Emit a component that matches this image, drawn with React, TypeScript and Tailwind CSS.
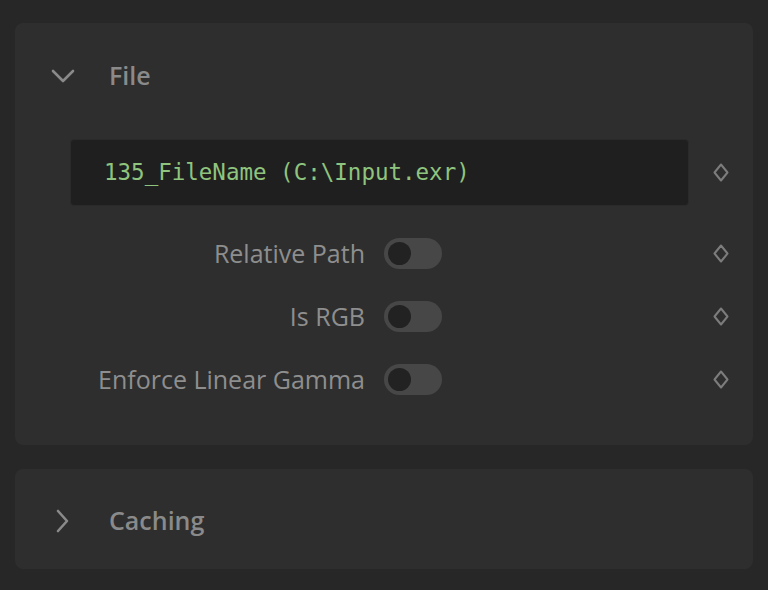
import React from "react";

const Diamond = () => (
  <svg width="16" height="19" viewBox="0 0 16 19" fill="none">
    <path
      d="M8 1.5 L14.5 9.5 L8 17.5 L1.5 9.5 Z"
      stroke="#7c7c7c"
      strokeWidth="2"
      strokeLinejoin="round"
    />
  </svg>
);

const Toggle = () => (
  <div className="flex items-center w-[58px] h-[31px] rounded-full bg-[#474747] px-[4px]">
    <div className="w-[23px] h-[23px] rounded-full bg-[#222222]" />
  </div>
);

const ToggleRow = ({ label }: { label: string }) => (
  <div className="flex items-center h-[63px]">
    <div className="w-[350px] text-right text-[25px] text-[#8e8e8e]">{label}</div>
    <div className="ml-[19px]">
      <Toggle />
    </div>
    <div className="flex-1" />
    <div className="w-[64px] flex justify-center">
      <Diamond />
    </div>
  </div>
);

export default function App() {
  return (
    <div
      className="w-[768px] h-[590px] bg-[#272727] px-[15px] pt-[23px] flex flex-col gap-[24px]"
      style={{ fontFamily: "'Open Sans', 'Noto Sans', sans-serif" }}
    >
      <div className="h-[422px] rounded-[8px] bg-[#2e2e2e] flex flex-col">
        <div className="h-[105px] flex items-center">
          <div className="w-[94px] flex justify-center pl-[2px]">
            <svg width="24" height="14" viewBox="0 0 24 14" fill="none">
              <path
                d="M2 2 L12 12 L22 2"
                stroke="#8a8a8a"
                strokeWidth="2.6"
                strokeLinecap="round"
                strokeLinejoin="round"
              />
            </svg>
          </div>
          <div className="text-[25px] font-semibold text-[#8a8a8a]">File</div>
        </div>
        <div className="flex flex-col pl-[55px] pt-[11px]">
          <div className="flex items-center">
            <div className="flex-1 h-[67px] rounded-[4px] bg-[#1f1f1f] border border-[#2a2a2a] flex items-center pl-[33px]">
              <span
                className="text-[22.5px] text-[#8fc47e]"
                style={{ fontFamily: "'DejaVu Sans Mono', 'Liberation Mono', monospace" }}
              >
                135_FileName (C:\Input.exr)
              </span>
            </div>
            <div className="w-[64px] flex justify-center">
              <Diamond />
            </div>
          </div>
        </div>
        <div className="flex flex-col pt-[16px]">
          <ToggleRow label="Relative Path" />
          <ToggleRow label="Is RGB" />
          <ToggleRow label="Enforce Linear Gamma" />
        </div>
      </div>
      <div className="h-[100px] rounded-[8px] bg-[#2e2e2e] flex items-center pt-[3px]">
        <div className="w-[94px] flex justify-center">
          <svg width="14" height="24" viewBox="0 0 14 24" fill="none">
            <path
              d="M3 2 L12 12 L3 22"
              stroke="#8a8a8a"
              strokeWidth="2.6"
              strokeLinecap="round"
              strokeLinejoin="round"
            />
          </svg>
        </div>
        <div className="text-[25px] font-semibold text-[#8a8a8a]">Caching</div>
      </div>
    </div>
  );
}
